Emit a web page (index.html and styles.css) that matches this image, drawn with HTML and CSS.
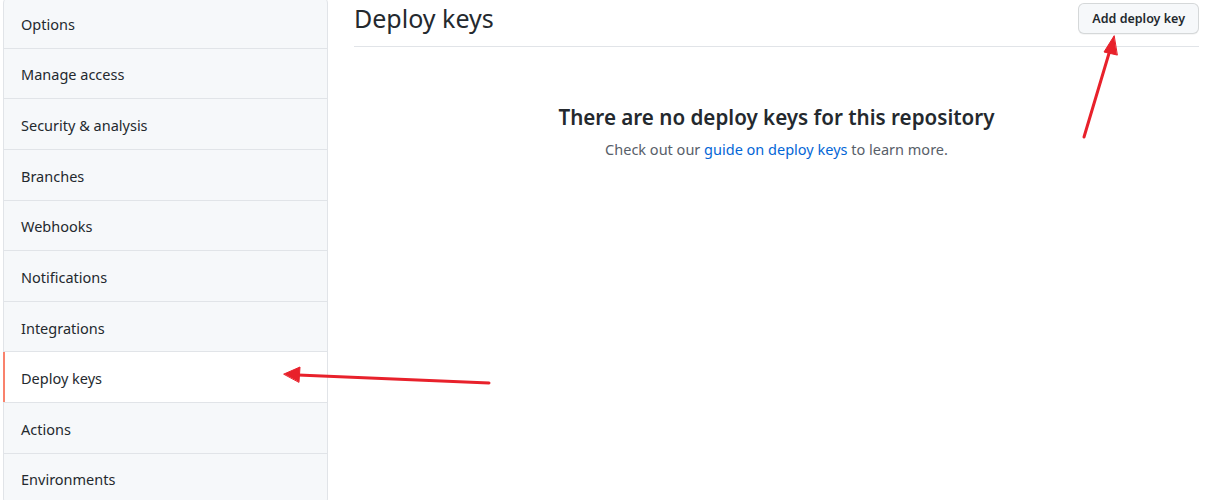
FILE: index.html
```html
<!DOCTYPE html>
<html>
<head>
<meta charset="utf-8">
<link rel="stylesheet" href="styles.css">
</head>
<body>
<div class="page">
  <nav class="menu">
    <a class="menu-item">Options</a>
    <a class="menu-item">Manage access</a>
    <a class="menu-item">Security &amp; analysis</a>
    <a class="menu-item">Branches</a>
    <a class="menu-item">Webhooks</a>
    <a class="menu-item">Notifications</a>
    <a class="menu-item">Integrations</a>
    <a class="menu-item selected">Deploy keys</a>
    <a class="menu-item">Actions</a>
    <a class="menu-item">Environments</a>
  </nav>
  <main class="content">
    <div class="subhead">
      <h2 class="subhead-title">Deploy keys</h2>
      <button class="btn">Add deploy key</button>
    </div>
    <div class="blankslate">
      <h3 class="blank-title">There are no deploy keys for this repository</h3>
      <p class="blank-text">Check out our <a class="link">guide on deploy keys</a> to learn more.</p>
    </div>
  </main>
</div>
<svg class="annotations" width="1228" height="500" viewBox="0 0 1228 500">
  <g stroke="#e8212b" stroke-width="3" stroke-linecap="round" fill="#e8212b">
    <line x1="1084" y1="137" x2="1110" y2="50"/>
    <polygon points="1114,36 1104,52 1117,55" stroke-width="1"/>
    <line x1="489" y1="383" x2="298" y2="375"/>
    <polygon points="284,374 300,367 299,382" stroke-width="1"/>
  </g>
</svg>
</body>
</html>
```
FILE: styles.css
```css
html, body {
  margin: 0;
  padding: 0;
  background: #ffffff;
  font-family: "Noto Sans", "Open Sans", sans-serif;
  color: #24292e;
}
.page {
  display: flex;
  align-items: flex-start;
  gap: 26px;
  padding: 0 29px 0 3px;
  height: 500px;
  overflow: hidden;
}
.menu {
  width: 325px;
  flex: none;
  margin-top: -3px;
  background: #f6f8fa;
  border: 1px solid #e1e4e8;
  border-radius: 6px;
  box-sizing: border-box;
}
.menu-item {
  display: flex;
  align-items: center;
  box-sizing: border-box;
  height: 50.625px;
  padding: 2px 17px 0;
  font-size: 14.5px;
  color: #24292e;
  border-bottom: 1px solid #e1e4e8;
  position: relative;
}
.menu-item.selected {
  background: #ffffff;
  color: #24292e;
}
.menu-item.selected::before {
  content: "";
  position: absolute;
  left: -1px;
  top: 0;
  bottom: 0;
  width: 2px;
  background: #f9826c;
}
.content {
  flex: 1;
  min-width: 0;
}
.subhead {
  display: flex;
  align-items: flex-start;
  justify-content: space-between;
  border-bottom: 1px solid #e1e4e8;
  height: 47px;
  box-sizing: border-box;
}
.subhead-title {
  margin: 0;
  margin-top: 2px;
  font-size: 25px;
  font-weight: 400;
  line-height: 32px;
  color: #24292e;
}
.btn {
  margin-top: 3px;
  height: 31px;
  padding: 0 13px;
  font-family: inherit;
  font-size: 12.5px;
  font-weight: 600;
  color: #24292e;
  background: #f6f8fa;
  border: 1px solid rgba(27,31,35,0.15);
  border-radius: 6px;
  box-shadow: 0 1px 0 rgba(27,31,35,0.04);
}
.blankslate {
  text-align: center;
  padding-top: 55px;
}
.blank-title {
  margin: 0;
  font-size: 20.6px;
  font-weight: 600;
  line-height: 30px;
  color: #24292e;
}
.blank-text {
  margin: 6px 0 0;
  font-size: 14.5px;
  line-height: 22px;
  color: #586069;
}
.link {
  color: #0366d6;
}
.annotations {
  position: absolute;
  left: 0;
  top: 0;
  pointer-events: none;
}
```
